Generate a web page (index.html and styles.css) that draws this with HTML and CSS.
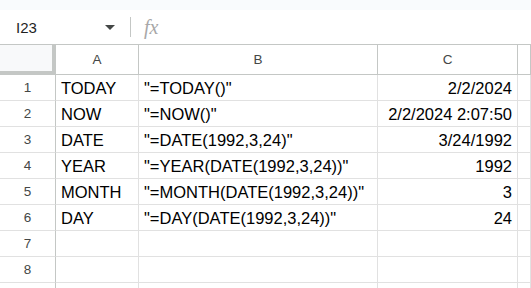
FILE: index.html
```html
<html>
<head>
<title>Date functions</title>
<link rel="stylesheet" href="styles.css">
</head>
<body>

<div class="topstrip"></div>

<div class="formulabar">
  <div class="namebox">
    <span class="cellref">I23</span>
    <span class="caret"></span>
  </div>
  <div class="divider"></div>
  <span class="fx">fx</span>
</div>

<div class="sheet">
  <div class="corner"></div>
  <div class="colhead">A</div>
  <div class="colhead">B</div>
  <div class="colhead">C</div>
  <div class="colhead"></div>

  <div class="rowhead">1</div>
  <div class="cell">TODAY</div>
  <div class="cell">"=TODAY()"</div>
  <div class="cell num">2/2/2024</div>
  <div class="cell"></div>

  <div class="rowhead">2</div>
  <div class="cell">NOW</div>
  <div class="cell">"=NOW()"</div>
  <div class="cell num">2/2/2024 2:07:50</div>
  <div class="cell"></div>

  <div class="rowhead">3</div>
  <div class="cell">DATE</div>
  <div class="cell">"=DATE(1992,3,24)"</div>
  <div class="cell num">3/24/1992</div>
  <div class="cell"></div>

  <div class="rowhead">4</div>
  <div class="cell">YEAR</div>
  <div class="cell">"=YEAR(DATE(1992,3,24))"</div>
  <div class="cell num">1992</div>
  <div class="cell"></div>

  <div class="rowhead">5</div>
  <div class="cell">MONTH</div>
  <div class="cell">"=MONTH(DATE(1992,3,24))"</div>
  <div class="cell num">3</div>
  <div class="cell"></div>

  <div class="rowhead">6</div>
  <div class="cell">DAY</div>
  <div class="cell">"=DAY(DATE(1992,3,24))"</div>
  <div class="cell num">24</div>
  <div class="cell"></div>

  <div class="rowhead">7</div>
  <div class="cell"></div>
  <div class="cell"></div>
  <div class="cell"></div>
  <div class="cell"></div>

  <div class="rowhead">8</div>
  <div class="cell"></div>
  <div class="cell"></div>
  <div class="cell"></div>
  <div class="cell"></div>

  <!-- row 9 is below the fold, only its grid lines show -->
  <div class="rowhead"></div>
  <div class="cell"></div>
  <div class="cell"></div>
  <div class="cell"></div>
  <div class="cell"></div>
</div>

</body>
</html>
```

FILE: styles.css
```css
* {
  box-sizing: border-box;
  font-family: 'Liberation Sans', Arial, sans-serif;
}

body {
  margin: 0;
  background: #fff;
  overflow: hidden;
  height: 288px;
}

.topstrip {
  height: 10px;
  background: #f9fbfd;
}

.formulabar {
  display: flex;
  align-items: center;
  height: 35px;
  border-bottom: 1px solid #c4c7c5;
}

.namebox {
  display: flex;
  align-items: center;
  justify-content: space-between;
  width: 130px;
  padding: 0 15px 0 16px;
}

.cellref {
  font-size: 15px;
  color: #1f1f1f;
}

.caret {
  width: 0;
  height: 0;
  border-left: 5px solid transparent;
  border-right: 5px solid transparent;
  border-top: 5px solid #444746;
}

.divider {
  width: 1px;
  height: 20px;
  background: #c4c7c5;
}

.fx {
  margin-left: 13px;
  font-family: 'Liberation Serif', serif;
  font-style: italic;
  font-size: 20px;
  color: #a8a8a8;
}

.sheet {
  display: grid;
  grid-template-columns: 56px 83px 239px 140px 1fr;
  grid-template-rows: 30px repeat(9, 26px);
}

.corner {
  background: #f8f9fa;
  border-right: 4px solid #c4c7c5;
  border-bottom: 4px solid #c4c7c5;
}

.colhead {
  display: flex;
  align-items: center;
  justify-content: center;
  font-size: 13.5px;
  color: #444746;
  border-right: 1px solid #c4c7c5;
  border-bottom: 1px solid #c4c7c5;
}

.rowhead {
  display: flex;
  align-items: center;
  justify-content: center;
  font-size: 13.5px;
  color: #444746;
  border-right: 1px solid #c4c7c5;
  border-bottom: 1px solid #e1e1e1;
}

.cell {
  display: flex;
  align-items: flex-end;
  padding: 0 5px 2px 5px;
  font-size: 16.5px;
  color: #000;
  white-space: nowrap;
  border-right: 1px solid #e1e1e1;
  border-bottom: 1px solid #e1e1e1;
}

.num {
  justify-content: flex-end;
}
```
